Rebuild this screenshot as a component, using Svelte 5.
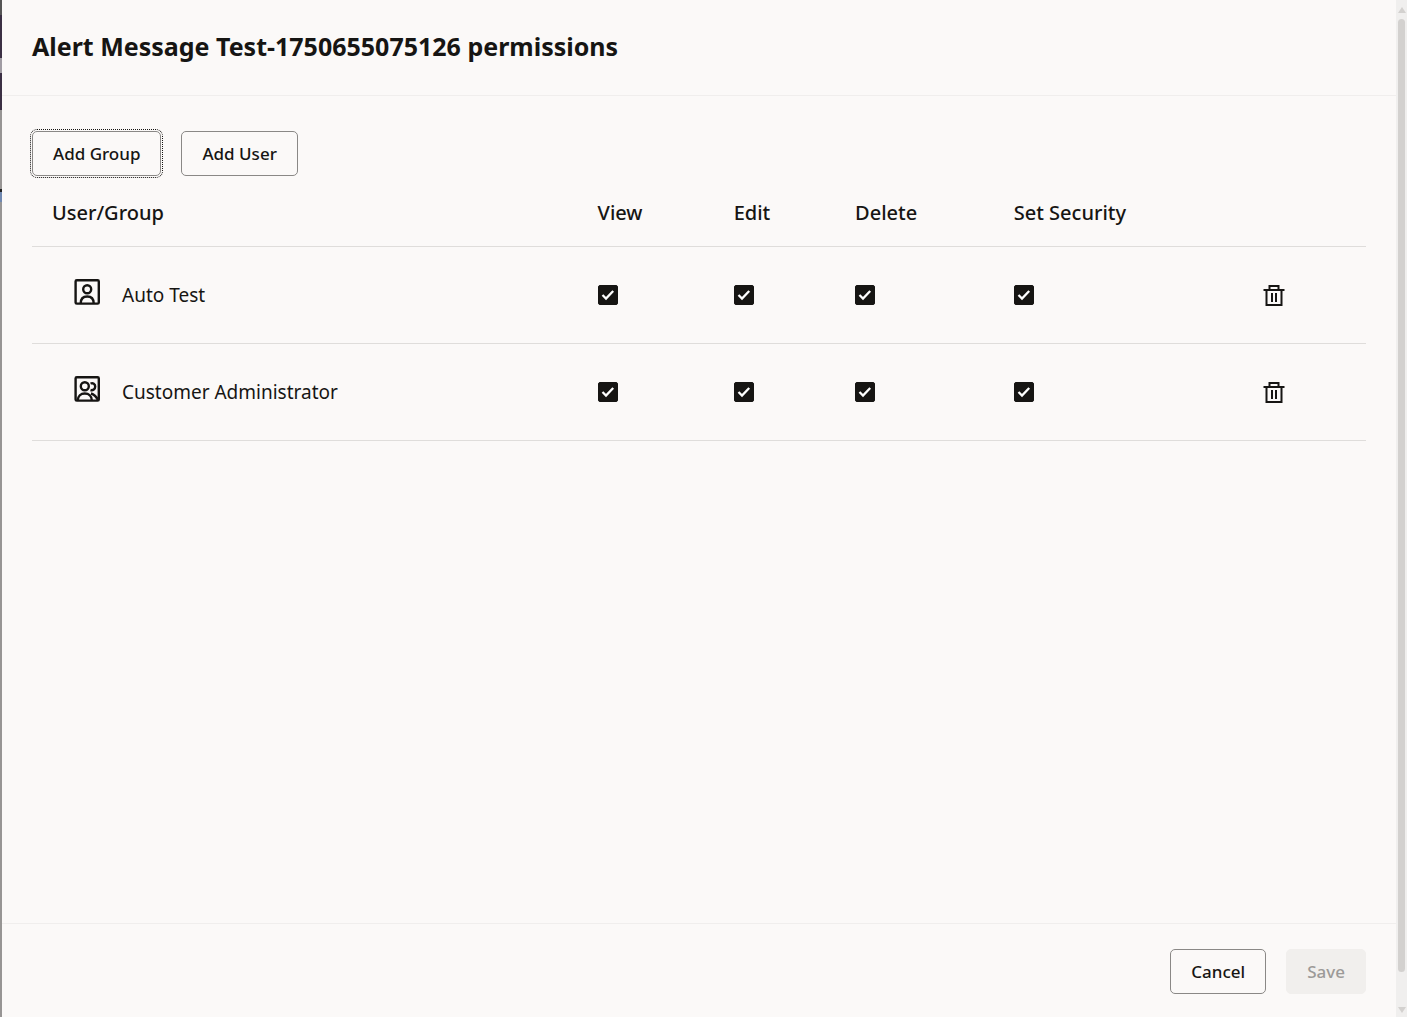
<script>
	const permissions = [
		{ key: 'view', label: 'View' },
		{ key: 'edit', label: 'Edit' },
		{ key: 'delete', label: 'Delete' },
		{ key: 'security', label: 'Set Security' }
	];

	let entries = $state([
		{ id: 1, name: 'Auto Test', type: 'user', view: true, edit: true, delete: true, security: true },
		{
			id: 2,
			name: 'Customer Administrator',
			type: 'group',
			view: true,
			edit: true,
			delete: true,
			security: true
		}
	]);
	let changed = $state(false);

	function removeEntry(id) {
		entries = entries.filter((entry) => entry.id !== id);
		changed = true;
	}
</script>

<div class="page">
	<div class="backdrop"></div>

	<div class="dialog" role="dialog" aria-labelledby="dialog-title">
		<header>
			<h1 id="dialog-title">Alert Message Test-1750655075126 permissions</h1>
		</header>

		<main>
			<div class="toolbar">
				<button class="btn focused" type="button">Add Group</button>
				<button class="btn" type="button">Add User</button>
			</div>

			<table>
				<colgroup>
					<col class="col_name" />
					<col class="col_view" />
					<col class="col_edit" />
					<col class="col_delete" />
					<col class="col_security" />
					<col />
				</colgroup>
				<thead>
					<tr>
						<th scope="col">User/Group</th>
						{#each permissions as permission}
							<th scope="col">{permission.label}</th>
						{/each}
						<td></td>
					</tr>
				</thead>
				<tbody>
					{#each entries as entry (entry.id)}
						<tr>
							<td>
								<div class="name">
									<svg class="type_icon" viewBox="0 0 26 26" fill="none" aria-hidden="true">
										<rect x="1.6" y="1.2" width="23.200" height="23.400" rx="1.2" />
										{#if entry.type === 'user'}
											<circle cx="13.200" cy="10.200" r="4" />
											<path d="M6.700 24.500c0-4.500 2.500-7 6.500-7s6.500 2.500 6.500 7" />
										{:else}
											<circle cx="10.800" cy="10.200" r="4" />
											<path d="M3.800 24.500c0-4.500 3-7 7-7s7 2.500 7 7" />
											<path d="M16.500 7.500c2.500-1 4.700.5 4.700 3s-2.200 4.300-4.700 3.500" />
											<path d="M17 17.500c3 .8 5.500 3.500 7 6.500" />
										{/if}
									</svg>
									<span>{entry.name}</span>
								</div>
							</td>
							{#each permissions as permission}
								<td>
									<span class="check">
										<input
											type="checkbox"
											aria-label="{permission.label} for {entry.name}"
											bind:checked={entry[permission.key]}
											onchange={() => (changed = true)}
										/>
										<svg viewBox="0 0 20 20" fill="none" aria-hidden="true">
											<path d="M4.500 10l3.500 3.500 7.200-7.500" />
										</svg>
									</span>
								</td>
							{/each}
							<td>
								<button
									class="remove"
									type="button"
									aria-label="Remove {entry.name}"
									onclick={() => removeEntry(entry.id)}
								>
									<svg viewBox="0 0 22 22" fill="none" aria-hidden="true">
										<path d="M6.500 6V2h9v4M.5 6h21M3.500 6v15h15V6M9 9v9M13 9v9" />
									</svg>
								</button>
							</td>
						</tr>
					{/each}
				</tbody>
			</table>
		</main>

		<footer>
			<button class="btn" type="button">Cancel</button>
			<button class="btn" type="button" disabled={!changed}>Save</button>
		</footer>
	</div>

	<div class="scrollbar" aria-hidden="true">
		<span class="arrow up"></span>
		<div class="track"><div class="thumb"></div></div>
		<span class="arrow down"></span>
	</div>
</div>

<style>
	:global(body) {
		margin: 0;
		background: #fbf9f8;
	}

	.page {
		display: flex;
		min-height: 100vh;
		font-family: 'Noto Sans', 'Open Sans', sans-serif;
		color: #161513;
	}

	/* sliver of the dimmed page behind the dialog */
	.backdrop {
		width: 2px;
		background: linear-gradient(
			#555 0 15px,
			#3b3044 15px 58px,
			#a09ca3 58px 73px,
			#3b3044 73px 110px,
			#979594 110px 189px,
			#222 189px 192px,
			#7088b0 192px 202px,
			#979594 202px
		);
	}

	.dialog {
		flex: 1;
		display: flex;
		flex-direction: column;
		background: #fbf9f8;
	}

	header {
		padding: 30px 30px 33px;
		border-bottom: 1px solid #f0eeed;
	}

	h1 {
		margin: 0;
		font-size: 25px;
		line-height: 32px;
		font-weight: 700;
	}

	main {
		flex: 1;
		padding: 35px 30px;
	}

	.toolbar {
		display: flex;
		gap: 20px;
	}

	.btn {
		height: 45px;
		padding: 0 20px;
		border: 1px solid #8a8886;
		border-radius: 5px;
		background: transparent;
		color: inherit;
		font: inherit;
		font-size: 17px;
		font-weight: 500;
		line-height: 24px;
	}

	.btn:hover {
		background: #f1efed;
	}

	.btn.focused {
		outline: 1px dotted #161513;
		outline-offset: 1px;
	}

	.btn:disabled {
		border-color: #f1efed;
		background: #f1efed;
		color: #9c9a98;
	}

	table {
		width: 100%;
		border-collapse: collapse;
		table-layout: fixed;
		font-size: 19px;
		line-height: 28px;
	}

	.col_name {
		width: 40.9%;
	}

	.col_view {
		width: 10.2%;
	}

	.col_edit {
		width: 9.1%;
	}

	.col_delete {
		width: 11.9%;
	}

	.col_security {
		width: 18.7%;
	}

	th,
	td {
		padding: 0 0 0 20px;
		border-bottom: 1px solid #dfdddb;
		text-align: left;
		vertical-align: middle;
	}

	th {
		height: 70px;
		padding-top: 4px;
		box-sizing: border-box;
		font-size: 20px;
		font-weight: 500;
	}

	tbody td {
		height: 96px;
	}

	.name {
		display: flex;
		align-items: center;
		gap: 22px;
		padding-left: 22px;
	}

	.type_icon {
		width: 26px;
		height: 26px;
		margin-bottom: 6px;
		stroke: #161513;
		stroke-width: 2.4;
	}

	.check {
		display: grid;
		width: 20px;
		height: 20px;
	}

	.check input,
	.check svg {
		grid-area: 1 / 1;
		width: 20px;
		height: 20px;
		margin: 0;
	}

	.check input {
		appearance: none;
		box-sizing: border-box;
		border: 1px solid #161513;
		border-radius: 2px;
	}

	.check input:checked {
		background: #161513;
	}

	.check svg {
		pointer-events: none;
		stroke: #fff;
		stroke-width: 2.3;
	}

	.check input:not(:checked) + svg {
		visibility: hidden;
	}

	.remove {
		display: block;
		margin: 0;
		padding: 0;
		border: 0;
		background: transparent;
		color: inherit;
	}

	.remove svg {
		display: block;
		width: 22px;
		height: 22px;
		stroke: currentColor;
		stroke-width: 2;
	}

	footer {
		display: flex;
		justify-content: flex-end;
		gap: 20px;
		padding: 25px 30px 23px;
		border-top: 1px solid #f0eeed;
	}

	.scrollbar {
		display: flex;
		flex-direction: column;
		align-items: center;
		gap: 6px;
		width: 11px;
		padding: 7px 0 4px;
		box-sizing: border-box;
		background: #f0efee;
	}

	.track {
		flex: 1;
		width: 7px;
	}

	.thumb {
		height: 97%;
		border-radius: 4px;
		background: #d3d1cf;
	}

	.arrow {
		border: 4px solid transparent;
	}

	.arrow.up {
		border-top: 0;
		border-bottom: 6px solid #d3d1cf;
	}

	.arrow.down {
		border-bottom: 0;
		border-top: 6px solid #d3d1cf;
	}
</style>
